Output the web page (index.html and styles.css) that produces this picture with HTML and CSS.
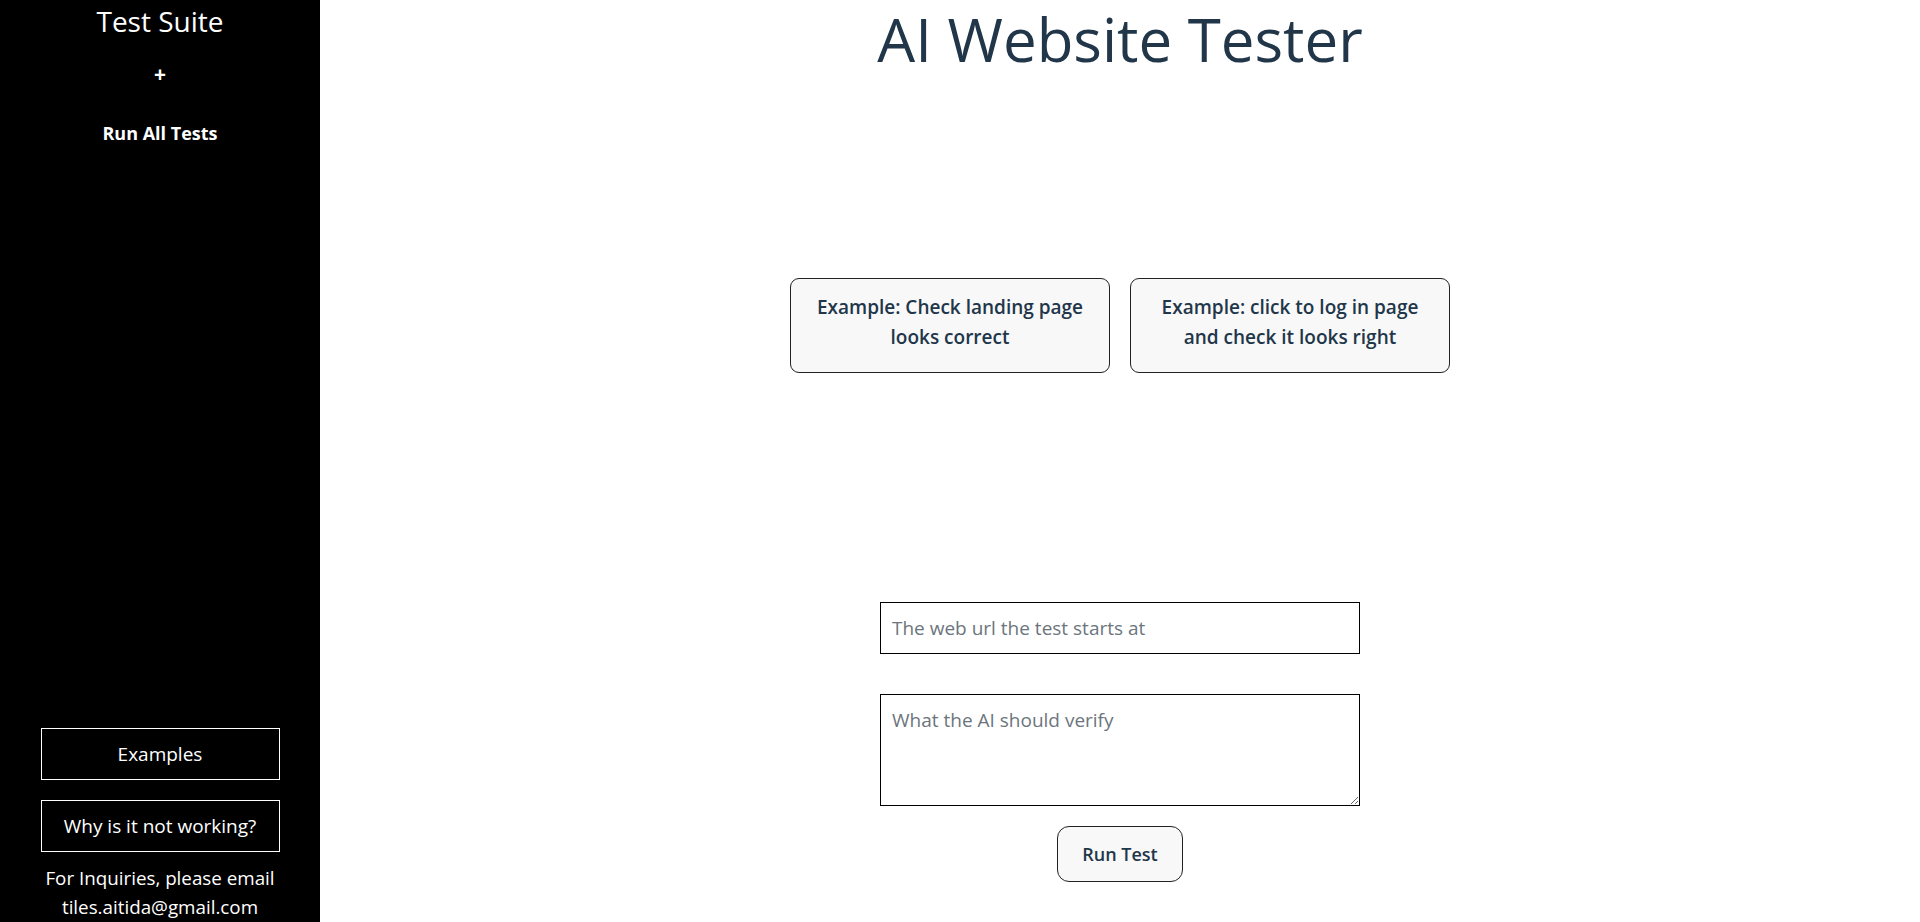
FILE: index.html
```html
<!DOCTYPE html>
<html lang="en">
<head>
<meta charset="utf-8">
<title>AI Website Tester</title>
<link rel="stylesheet" href="styles.css">
</head>
<body>
<div class="app">
  <aside class="sidebar">
    <div class="sidebar-top">
      <h2 class="suite-title">Test Suite</h2>
      <button class="plus-btn">+</button>
      <button class="run-all">Run All Tests</button>
    </div>
    <div class="sidebar-bottom">
      <button class="side-btn">Examples</button>
      <button class="side-btn">Why is it not working?</button>
      <p class="inquiry">For Inquiries, please email<br>tiles.aitida@gmail.com</p>
    </div>
  </aside>
  <main class="main">
    <h1 class="title">AI Website Tester</h1>
    <div class="examples">
      <button class="example">Example: Check landing page looks correct</button>
      <button class="example">Example: click to log in page and check it looks right</button>
    </div>
    <form class="test-form">
      <input class="url-input" type="text" placeholder="The web url the test starts at">
      <textarea class="verify-input" placeholder="What the AI should verify"></textarea>
      <button class="run-test" type="button">Run Test</button>
    </form>
  </main>
</div>
</body>
</html>
```
FILE: styles.css
```css
* { box-sizing: border-box; }
html, body { margin: 0; padding: 0; }
body {
  font-family: "Open Sans", "Noto Sans", sans-serif;
  background: #fff;
  color: #22364a;
  overflow: hidden;
}
.app {
  display: flex;
  height: 922px;
}
.sidebar {
  width: 320px;
  flex: 0 0 320px;
  background: #000;
  color: #fff;
  display: flex;
  flex-direction: column;
  justify-content: space-between;
  align-items: center;
  text-align: center;
}
.sidebar-top {
  display: flex;
  flex-direction: column;
  align-items: center;
}
.suite-title {
  margin: 0;
  font-weight: 400;
  font-size: 28px;
  line-height: 42px;
}
.plus-btn, .run-all {
  background: none;
  border: none;
  color: #fff;
  font-family: inherit;
  cursor: pointer;
}
.plus-btn {
  font-size: 21px;
  font-weight: 700;
  margin-top: 20px;
  padding: 0;
  line-height: 24px;
}
.run-all {
  font-size: 18px;
  font-weight: 700;
  margin-top: 35px;
  padding: 0;
  line-height: 24px;
}
.sidebar-bottom {
  display: flex;
  flex-direction: column;
  align-items: center;
  gap: 20px;
}
.side-btn {
  width: 239px;
  height: 52px;
  background: #000;
  color: #fff;
  border: 1px solid #fff;
  font-family: inherit;
  font-size: 19px;
  cursor: pointer;
}
.inquiry {
  margin: -8px 0 0;
  font-size: 18.8px;
  line-height: 29px;
}
.main {
  flex: 1;
  display: flex;
  flex-direction: column;
  align-items: center;
}
.title {
  margin: 0;
  font-weight: 400;
  font-size: 60px;
  line-height: 78px;
  color: #22364a;
}
.examples {
  display: flex;
  gap: 20px;
  margin-top: 200px;
}
.example {
  width: 320px;
  height: 95px;
  background: #f8f8f8;
  border: 1px solid #222;
  border-radius: 9px;
  font-family: inherit;
  font-size: 19px;
  font-weight: 600;
  line-height: 30px;
  color: #22364a;
  padding: 0 20px 8px;
  cursor: pointer;
}
.test-form {
  display: flex;
  flex-direction: column;
  align-items: center;
  margin-top: 229px;
}
.url-input, .verify-input {
  width: 480px;
  border: 1px solid #000;
  font-family: inherit;
  font-size: 19px;
  color: #22364a;
  padding: 0 11px;
  outline: none;
}
.url-input {
  height: 52px;
}
.verify-input {
  height: 112px;
  margin-top: 40px;
  padding-top: 12px;
  resize: vertical;
}
.url-input::placeholder, .verify-input::placeholder {
  color: #6c757d;
}
.run-test {
  margin-top: 20px;
  width: 126px;
  height: 56px;
  background: #f8f8f8;
  border: 1px solid #222;
  border-radius: 12px;
  font-family: inherit;
  font-size: 18px;
  font-weight: 600;
  color: #22364a;
  cursor: pointer;
}
```
